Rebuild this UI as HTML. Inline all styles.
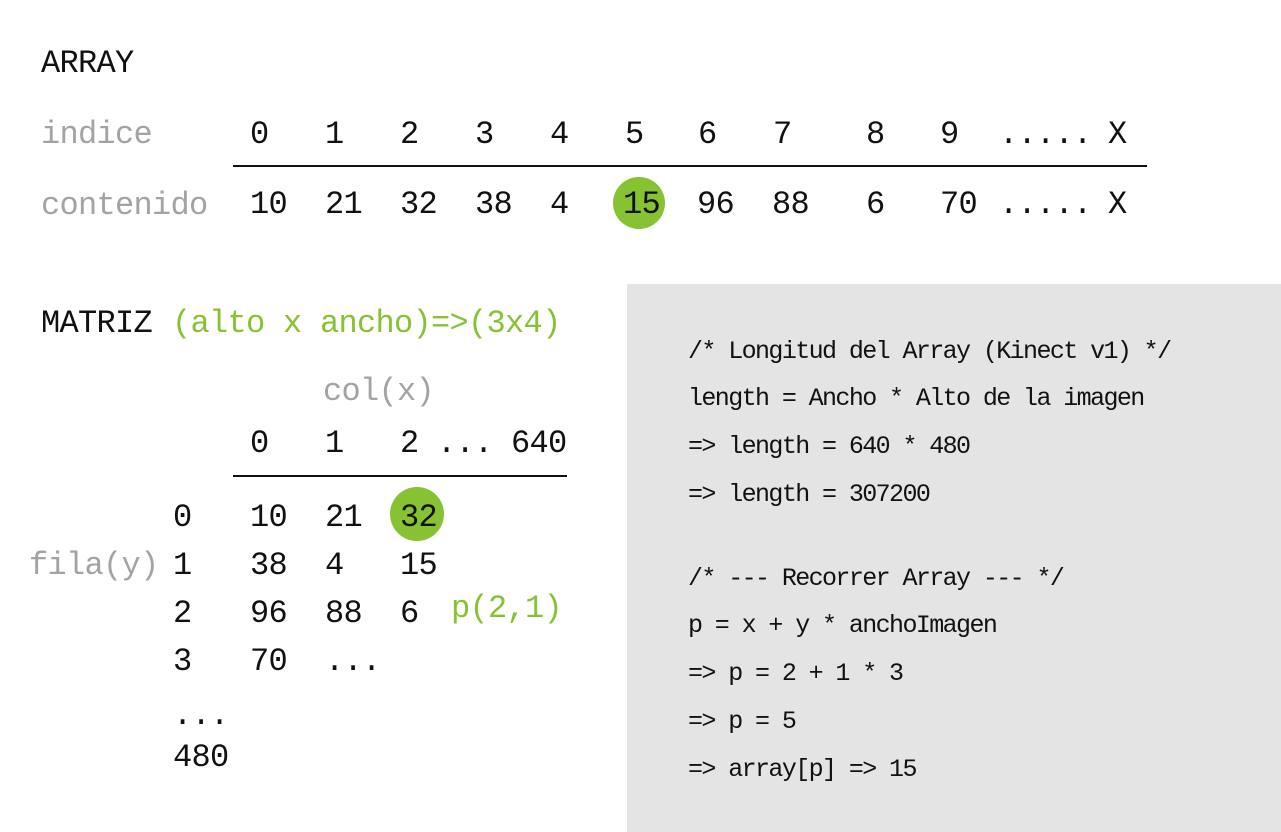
<!DOCTYPE html>
<html><head><meta charset="utf-8"><style>
html,body{margin:0;padding:0;background:#fff;width:1281px;height:832px;overflow:hidden;position:relative}
.t{position:absolute;font-family:"Liberation Mono","DejaVu Sans Mono",monospace;font-size:32px;line-height:32px;color:#111;white-space:pre;letter-spacing:-0.7px}
.g{color:#a3a3a3}.gr{color:#86c232}
.p{position:absolute;font-family:"Liberation Mono","DejaVu Sans Mono",monospace;font-size:25px;line-height:25px;color:#111;white-space:pre;letter-spacing:-1.6px}
.c{position:absolute;border-radius:50%;background:#86c232}
.l{position:absolute;height:1.5px;background:#111}
</style></head><body>
<div style="position:absolute;left:627px;top:284px;width:654px;height:548px;background:#e4e4e4"></div>
<div class="c" style="left:613px;top:177px;width:52px;height:52px"></div>
<div class="c" style="left:390px;top:487px;width:54px;height:54px"></div>
<div class="l" style="left:233px;top:165px;width:914px"></div>
<div class="l" style="left:233px;top:475px;width:334px"></div>

<div class="t" style="left:41px;top:48px">ARRAY</div>
<div class="t g" style="left:41px;top:119px">indice</div>
<div class="t" style="left:250px;top:119px">0</div>
<div class="t" style="left:325px;top:119px">1</div>
<div class="t" style="left:400px;top:119px">2</div>
<div class="t" style="left:475px;top:119px">3</div>
<div class="t" style="left:550px;top:119px">4</div>
<div class="t" style="left:625px;top:119px">5</div>
<div class="t" style="left:698px;top:119px">6</div>
<div class="t" style="left:773px;top:119px">7</div>
<div class="t" style="left:866px;top:119px">8</div>
<div class="t" style="left:940px;top:119px">9</div>
<div class="t" style="left:999px;top:119px">.....</div>
<div class="t" style="left:1108px;top:119px">X</div>

<div class="t g" style="left:41px;top:190px">contenido</div>
<div class="t" style="left:250px;top:189px">10</div>
<div class="t" style="left:325px;top:189px">21</div>
<div class="t" style="left:400px;top:189px">32</div>
<div class="t" style="left:475px;top:189px">38</div>
<div class="t" style="left:550px;top:189px">4</div>
<div class="t" style="left:623px;top:189px">15</div>
<div class="t" style="left:697px;top:189px">96</div>
<div class="t" style="left:772px;top:189px">88</div>
<div class="t" style="left:866px;top:189px">6</div>
<div class="t" style="left:940px;top:189px">70</div>
<div class="t" style="left:999px;top:189px">.....</div>
<div class="t" style="left:1108px;top:189px">X</div>

<div class="t" style="left:41px;top:308px">MATRIZ</div>
<div class="t gr" style="left:172px;top:308px">(alto x ancho)=&gt;(3x4)</div>
<div class="t g" style="left:323px;top:376px">col(x)</div>
<div class="t" style="left:250px;top:428px">0</div>
<div class="t" style="left:325px;top:428px">1</div>
<div class="t" style="left:400px;top:428px">2 ... 640</div>

<div class="t" style="left:173px;top:502px">0</div>
<div class="t" style="left:250px;top:502px">10</div>
<div class="t" style="left:325px;top:502px">21</div>
<div class="t" style="left:400px;top:502px">32</div>
<div class="t g" style="left:29px;top:550px">fila(y)</div>
<div class="t" style="left:173px;top:550px">1</div>
<div class="t" style="left:250px;top:550px">38</div>
<div class="t" style="left:325px;top:550px">4</div>
<div class="t" style="left:400px;top:550px">15</div>
<div class="t" style="left:173px;top:598px">2</div>
<div class="t" style="left:250px;top:598px">96</div>
<div class="t" style="left:325px;top:598px">88</div>
<div class="t" style="left:400px;top:598px">6</div>
<div class="t gr" style="left:451px;top:593px">p(2,1)</div>
<div class="t" style="left:173px;top:646px">3</div>
<div class="t" style="left:250px;top:646px">70</div>
<div class="t" style="left:325px;top:646px">...</div>
<div class="t" style="left:173px;top:700px">...</div>
<div class="t" style="left:173px;top:742px">480</div>

<div class="p" style="left:688px;top:339px">/* Longitud del Array (Kinect v1) */</div>
<div class="p" style="left:688px;top:386px">length = Ancho * Alto de la imagen</div>
<div class="p" style="left:688px;top:434px">=&gt; length = 640 * 480</div>
<div class="p" style="left:688px;top:482px">=&gt; length = 307200</div>
<div class="p" style="left:688px;top:566px">/* --- Recorrer Array --- */</div>
<div class="p" style="left:688px;top:613px">p = x + y * anchoImagen</div>
<div class="p" style="left:688px;top:661px">=&gt; p = 2 + 1 * 3</div>
<div class="p" style="left:688px;top:709px">=&gt; p = 5</div>
<div class="p" style="left:688px;top:757px">=&gt; array[p] =&gt; 15</div>
</body></html>
